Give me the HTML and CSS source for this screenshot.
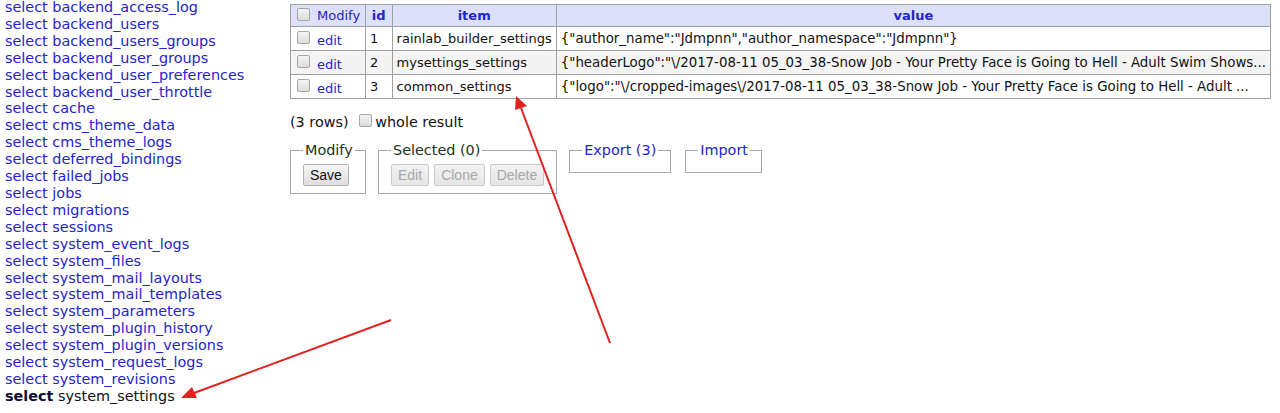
FILE: index.html
```html
<!DOCTYPE html>
<html>
<head>
<meta charset="utf-8">
<link rel="stylesheet" href="styles.css">
</head>
<body>
<div class="page">
  <ul class="menu">
    <li><a href="#">select</a> <a href="#">backend_access_log</a></li>
    <li><a href="#">select</a> <a href="#">backend_users</a></li>
    <li><a href="#">select</a> <a href="#">backend_users_groups</a></li>
    <li><a href="#">select</a> <a href="#">backend_user_groups</a></li>
    <li><a href="#">select</a> <a href="#">backend_user_preferences</a></li>
    <li><a href="#">select</a> <a href="#">backend_user_throttle</a></li>
    <li><a href="#">select</a> <a href="#">cache</a></li>
    <li><a href="#">select</a> <a href="#">cms_theme_data</a></li>
    <li><a href="#">select</a> <a href="#">cms_theme_logs</a></li>
    <li><a href="#">select</a> <a href="#">deferred_bindings</a></li>
    <li><a href="#">select</a> <a href="#">failed_jobs</a></li>
    <li><a href="#">select</a> <a href="#">jobs</a></li>
    <li><a href="#">select</a> <a href="#">migrations</a></li>
    <li><a href="#">select</a> <a href="#">sessions</a></li>
    <li><a href="#">select</a> <a href="#">system_event_logs</a></li>
    <li><a href="#">select</a> <a href="#">system_files</a></li>
    <li><a href="#">select</a> <a href="#">system_mail_layouts</a></li>
    <li><a href="#">select</a> <a href="#">system_mail_templates</a></li>
    <li><a href="#">select</a> <a href="#">system_parameters</a></li>
    <li><a href="#">select</a> <a href="#">system_plugin_history</a></li>
    <li><a href="#">select</a> <a href="#">system_plugin_versions</a></li>
    <li><a href="#">select</a> <a href="#">system_request_logs</a></li>
    <li><a href="#">select</a> <a href="#">system_revisions</a></li>
    <li class="active"><a href="#" class="b">select</a> <a href="#">system_settings</a></li>
  </ul>
  <div class="content">
    <table class="data">
      <thead>
        <tr>
          <th class="c1"><span class="cb"></span><a href="#" class="mod">Modify</a></th>
          <th class="c2"><a href="#">id</a></th>
          <th class="c3"><a href="#">item</a></th>
          <th class="c4"><a href="#">value</a></th>
        </tr>
      </thead>
      <tbody>
        <tr>
          <td><span class="cb"></span><a href="#" class="edit">edit</a></td>
          <td>1</td>
          <td>rainlab_builder_settings</td>
          <td class="val">{"author_name":"Jdmpnn","author_namespace":"Jdmpnn"}</td>
        </tr>
        <tr class="odd">
          <td><span class="cb"></span><a href="#" class="edit">edit</a></td>
          <td>2</td>
          <td>mysettings_settings</td>
          <td class="val">{"headerLogo":"\/2017-08-11 05_03_38-Snow Job - Your Pretty Face is Going to Hell - Adult Swim Shows...</td>
        </tr>
        <tr>
          <td><span class="cb"></span><a href="#" class="edit">edit</a></td>
          <td>3</td>
          <td>common_settings</td>
          <td class="val">{"logo":"\/cropped-images\/2017-08-11 05_03_38-Snow Job - Your Pretty Face is Going to Hell - Adult ...</td>
        </tr>
      </tbody>
    </table>
    <p class="rows">(3 rows) <span class="cb"></span>whole result</p>
    <div class="fields">
      <fieldset class="fs fs-mod">
        <legend>Modify</legend>
        <button class="btn">Save</button>
      </fieldset>
      <fieldset class="fs fs-sel">
        <legend>Selected (0)</legend>
        <div class="btns">
          <button class="btn dis">Edit</button>
          <button class="btn dis">Clone</button>
          <button class="btn dis">Delete</button>
        </div>
      </fieldset>
      <fieldset class="fs fs-exp">
        <legend><a href="#">Export (3)</a></legend>
        <div class="spacer"></div>
      </fieldset>
      <fieldset class="fs fs-imp">
        <legend><a href="#">Import</a></legend>
        <div class="spacer"></div>
      </fieldset>
    </div>
  </div>
  <svg class="arrows" width="1280" height="413" viewBox="0 0 1280 413">
    <g stroke="#e3221f" stroke-width="2" fill="#e3221f">
      <line x1="391" y1="320" x2="194" y2="393"/>
      <polygon points="181,398 192,387 197,398" stroke="none"/>
      <line x1="610" y1="343" x2="521" y2="108"/>
      <polygon points="516,96 515,110 527,106" stroke="none"/>
    </g>
  </svg>
</div>
</body>
</html>
```

FILE: styles.css
```css
html, body {
  margin: 0;
  padding: 0;
  background: #fff;
}
body {
  font-family: "DejaVu Sans", Verdana, sans-serif;
  font-size: 14.4px;
  color: #111;
}
a {
  color: #2424cc;
  text-decoration: none;
}
.page {
  position: relative;
  width: 1280px;
  height: 413px;
  overflow: hidden;
  display: flex;
}
.menu {
  list-style: none;
  margin: -1px 0 0 0;
  padding: 0 0 0 5px;
  width: 285px;
  flex: none;
  line-height: 16.9px;
}
.menu li {
  white-space: nowrap;
}
.menu .active a {
  color: #111;
}
.menu .active a.b {
  font-weight: bold;
  color: #0d0d3a;
}
.content {
  padding-top: 4px;
}
.data {
  border-collapse: collapse;
  border: 1px solid #a0a0a0;
  width: 981px;
  font-size: 13px;
}
.data th, .data td {
  border: 1px solid #a0a0a0;
  padding: 0 4px;
  white-space: nowrap;
  text-align: left;
}
.data th {
  background: #dde0fa;
  height: 21px;
  text-align: center;
}
.data th a {
  font-weight: bold;
}
.data th a.mod {
  font-weight: normal;
}
.data th.c1 { width: 66px; text-align: left; }
.data th.c2 { width: 18px; }
.data th.c3 { width: 155px; }
.data td {
  height: 23px;
}
.data td.val {
  font-size: 13.35px;
}
.data tr.odd td {
  background: #f4f4f4;
}
.cb {
  display: inline-block;
  width: 11px;
  height: 11px;
  border: 1px solid #a8a8a8;
  border-radius: 2px;
  background: linear-gradient(#f4f4f4, #dcdcdc);
  vertical-align: -1px;
  margin: 0 7px 0 2px;
}
.data td .edit {
  position: relative;
  top: 2px;
}
.rows {
  margin: 14px 0 0 0;
  line-height: 18px;
}
.rows .cb {
  margin: 0 3px 0 6px;
  vertical-align: 0;
}
.fields {
  display: flex;
  align-items: flex-start;
  margin-top: 10px;
}
.fs {
  margin: 0 12px 0 0;
  border: 1px solid #a8a8a8;
  padding: 5px 10px 7px 12px;
  min-width: 0;
}
.fs legend {
  padding: 0 2px;
  line-height: 18px;
  color: #223322;
}
.fs-mod { width: 52px; }
.fs-sel { padding-right: 12px; }
.btns {
  display: flex;
  gap: 5px;
  white-space: nowrap;
}
.fs-exp { width: 88px; padding: 0 0 0 12px; }
.fs-imp { width: 63px; padding: 0 0 0 12px; margin-left: 2px; }
.spacer {
  height: 13px;
}
.btn {
  font-family: "Liberation Sans", Arial, sans-serif;
  font-size: 14px;
  height: 22px;
  padding: 0 6px;
  border: 1px solid #b4b4b4;
  border-radius: 2px;
  background: linear-gradient(#f6f6f6, #dedede);
  color: #111;
  margin: 0;
}
.btn.dis {
  color: #a8a8a8;
  border-color: #c8c8c8;
  background: linear-gradient(#f2f2f2, #e6e6e6);
}
.arrows {
  position: absolute;
  left: 0;
  top: 0;
  pointer-events: none;
}
```
